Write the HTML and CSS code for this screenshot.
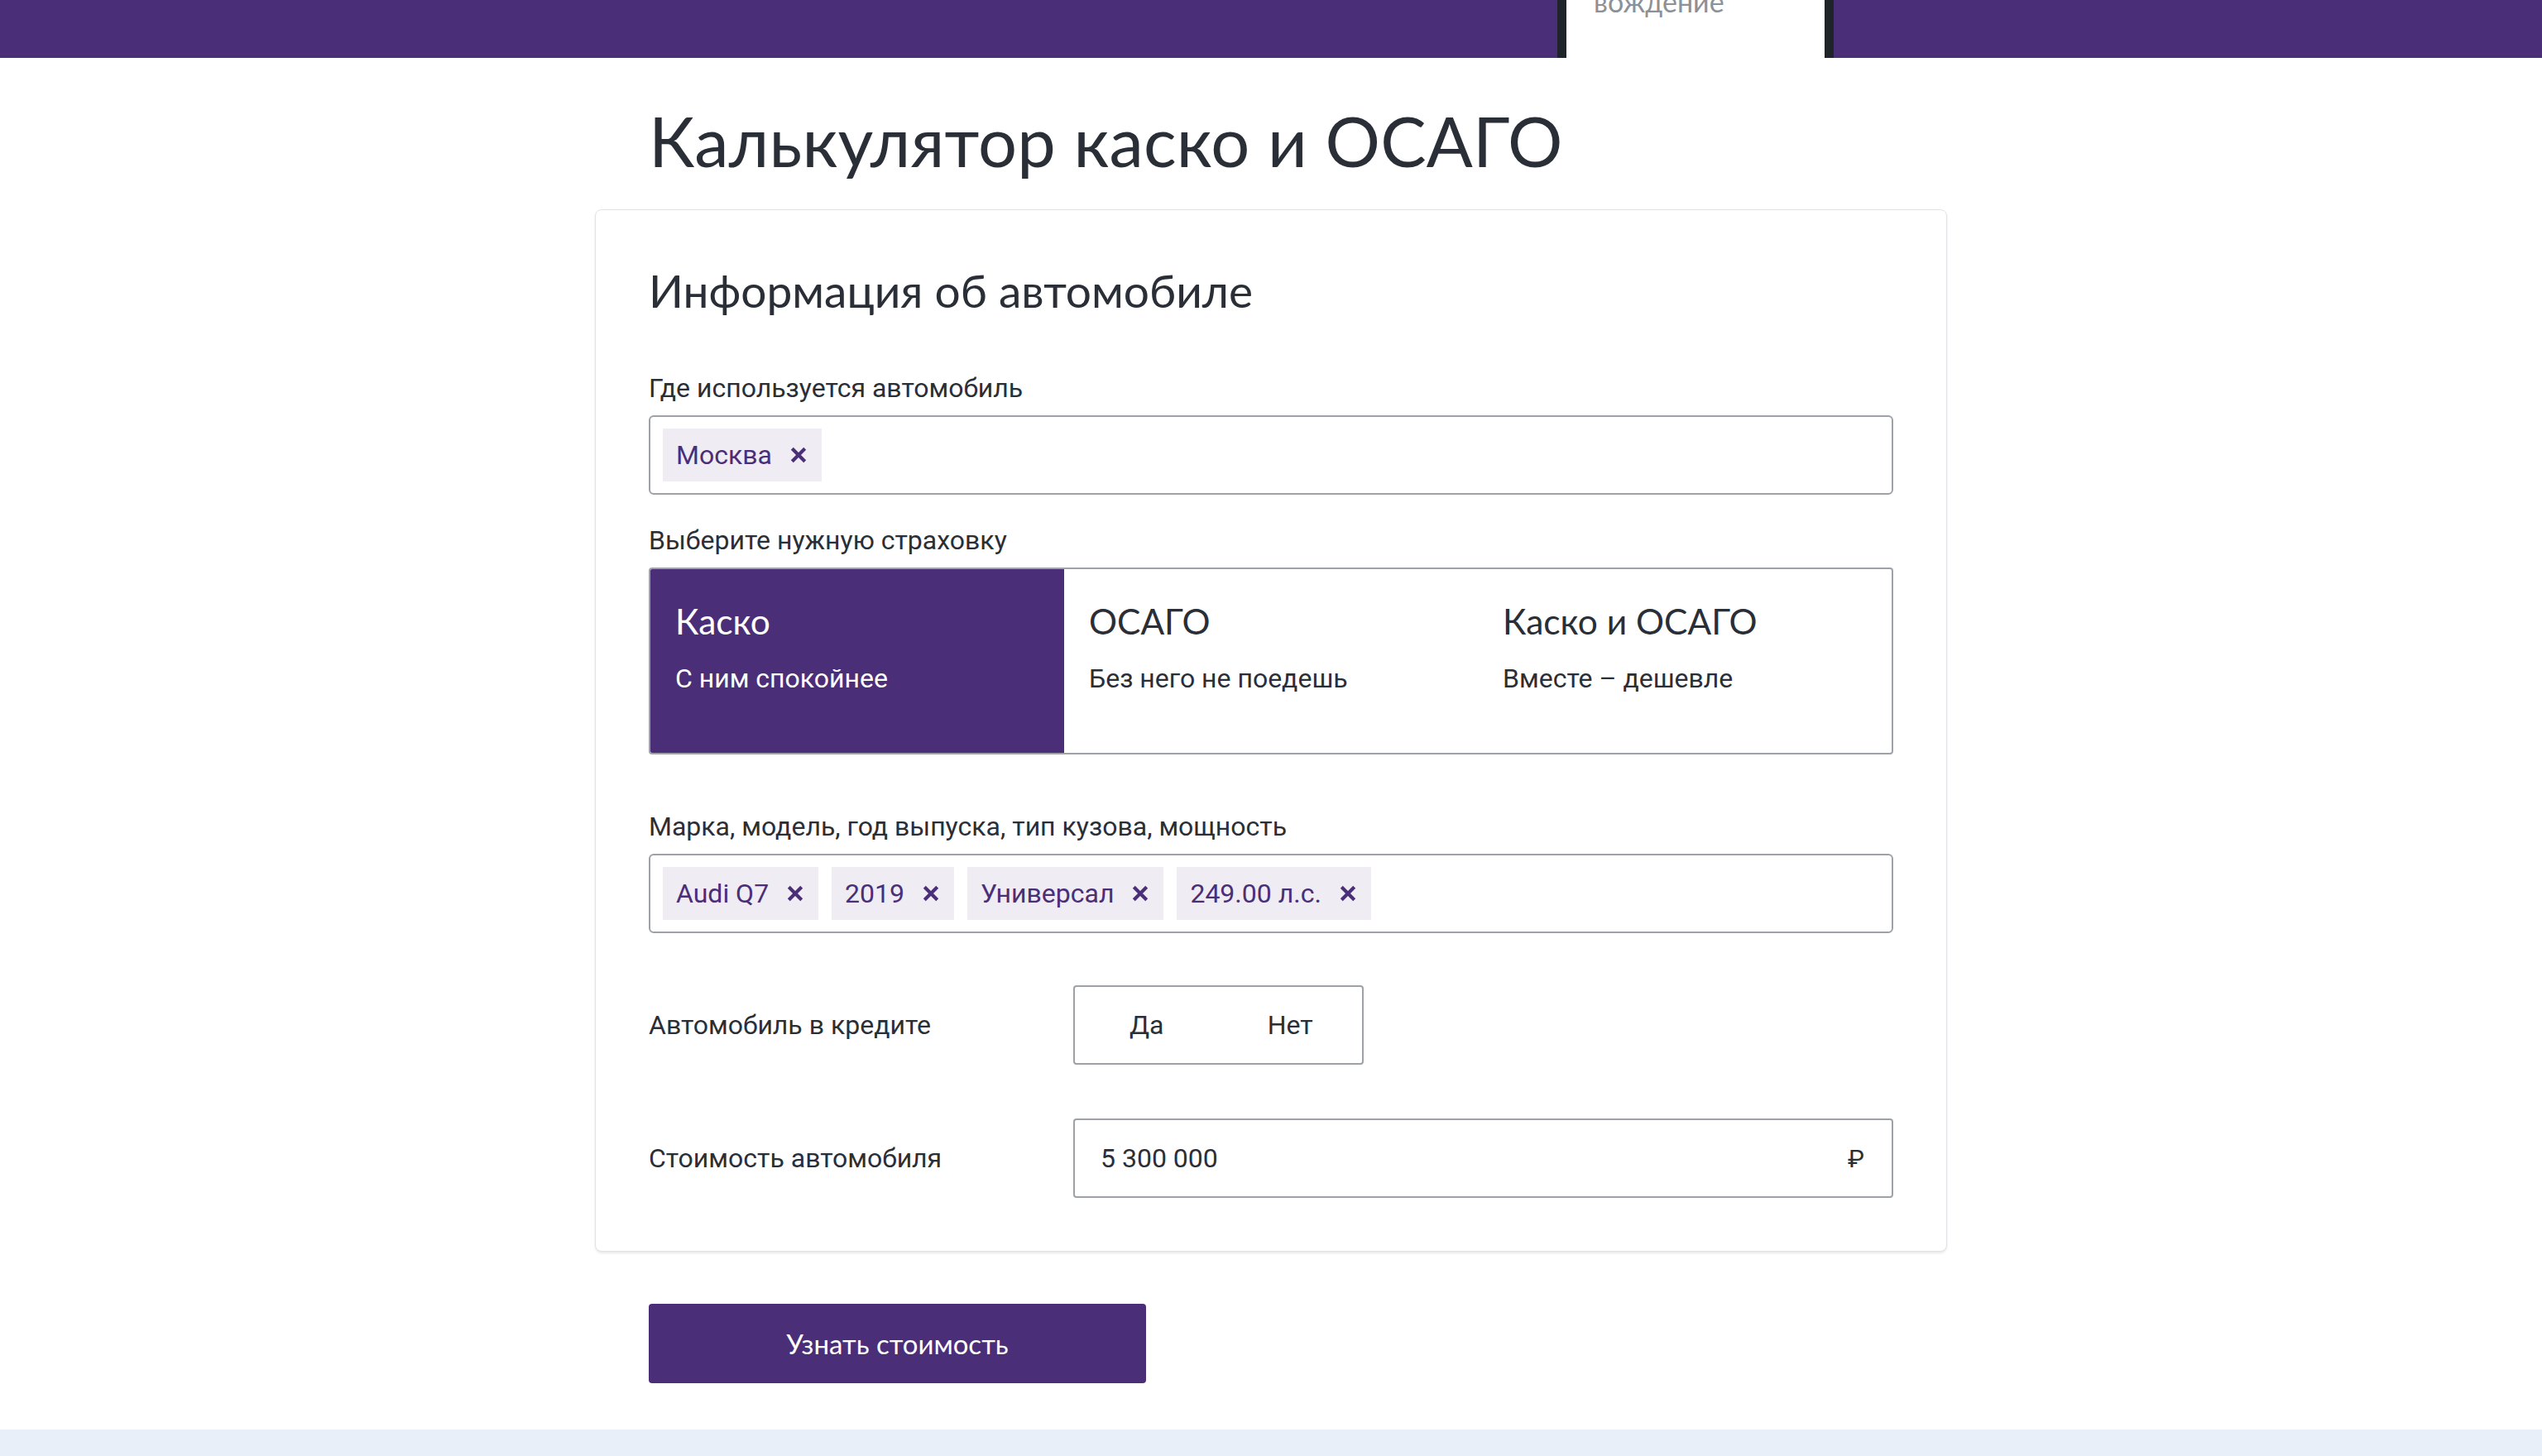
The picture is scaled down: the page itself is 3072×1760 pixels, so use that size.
FILE: index.html
```html
<!DOCTYPE html>
<html lang="ru">
<head>
<meta charset="utf-8">
<title>Калькулятор каско и ОСАГО</title>
<link rel="stylesheet" href="styles.css">
</head>
<body>
<header class="topbar">
  <div class="menu-tab"><span class="menu-tab-text">вождение</span></div>
</header>

<main class="page">
  <h1 class="title">Калькулятор каско и ОСАГО</h1>

  <section class="card">
    <h2 class="card-title">Информация об автомобиле</h2>

    <div class="label">Где используется автомобиль</div>
    <div class="field field-chips">
      <span class="chip">Москва<svg class="chip-x" viewBox="0 0 20 20"><path d="M3 3L17 17M17 3L3 17"/></svg></span>
    </div>

    <div class="label label-gap">Выберите нужную страховку</div>
    <div class="seg">
      <div class="seg-item seg-active">
        <div class="seg-title">Каско</div>
        <div class="seg-sub">С ним спокойнее</div>
      </div>
      <div class="seg-item">
        <div class="seg-title">ОСАГО</div>
        <div class="seg-sub">Без него не поедешь</div>
      </div>
      <div class="seg-item">
        <div class="seg-title">Каско и ОСАГО</div>
        <div class="seg-sub">Вместе – дешевле</div>
      </div>
    </div>

    <div class="label label-gap-lg">Марка, модель, год выпуска, тип кузова, мощность</div>
    <div class="field field-chips">
      <span class="chip">Audi Q7<svg class="chip-x" viewBox="0 0 20 20"><path d="M3 3L17 17M17 3L3 17"/></svg></span>
      <span class="chip">2019<svg class="chip-x" viewBox="0 0 20 20"><path d="M3 3L17 17M17 3L3 17"/></svg></span>
      <span class="chip">Универсал<svg class="chip-x" viewBox="0 0 20 20"><path d="M3 3L17 17M17 3L3 17"/></svg></span>
      <span class="chip">249.00 л.с.<svg class="chip-x" viewBox="0 0 20 20"><path d="M3 3L17 17M17 3L3 17"/></svg></span>
    </div>

    <div class="row row-credit">
      <div class="row-label">Автомобиль в кредите</div>
      <div class="toggle">
        <div class="toggle-opt">Да</div>
        <div class="toggle-opt">Нет</div>
      </div>
    </div>

    <div class="row row-price">
      <div class="row-label">Стоимость автомобиля</div>
      <div class="field field-price">
        <span class="price-value">5 300 000</span>
        <span class="price-cur">₽</span>
      </div>
    </div>
  </section>

  <button class="submit" type="button">Узнать стоимость</button>
</main>

<footer class="footer-strip"></footer>
</body>
</html>
```
FILE: styles.css
```css
* { box-sizing: border-box; }

html, body {
  margin: 0;
  padding: 0;
  background: #ffffff;
}

body {
  font-family: Roboto, "Noto Sans", sans-serif;
  font-size: 32px;
  color: #2a2f37;
  overflow: hidden;
}

/* top bar */
.topbar {
  position: relative;
  height: 70px;
  background: #4a2e77;
}

.menu-tab {
  position: absolute;
  left: 1882px;
  top: 0;
  width: 334px;
  height: 70px;
  background: #ffffff;
  border-left: 11px solid #1e2427;
  border-right: 11px solid #1e2427;
  overflow: hidden;
}

.menu-tab-text {
  position: absolute;
  left: 33px;
  top: -19px;
  font-family: Lato, "Noto Sans", sans-serif;
  font-size: 34px;
  line-height: 41px;
  color: #8c9198;
  white-space: nowrap;
}

/* page */
.page {
  width: 1634px;
  margin: 0 auto;
}

.title {
  margin: 51px 0 34px 65px;
  font-family: Lato, "Noto Sans", sans-serif;
  font-weight: 400;
  font-size: 83px;
  line-height: 98px;
  letter-spacing: 0.2px;
  color: #2a2f37;
}

.card {
  border: 1px solid #e2e3e6;
  border-radius: 8px;
  box-shadow: 0 2px 3px rgba(0, 0, 0, 0.09);
  padding: 64px;
  background: #ffffff;
}

.card-title {
  margin: 0 0 65px;
  font-family: Lato, "Noto Sans", sans-serif;
  font-weight: 400;
  font-size: 55px;
  line-height: 66px;
  color: #2a2f37;
}

.label {
  font-size: 32px;
  line-height: 40px;
  margin-bottom: 13px;
}

.label-gap { margin-top: 35px; }
.label-gap-lg { margin-top: 67px; }

.field {
  height: 96px;
  border: 2px solid #9ea2a7;
  border-radius: 6px;
  display: flex;
  align-items: center;
}

.field-chips {
  padding: 0 15px;
  gap: 16px;
}

.chip {
  height: 64px;
  display: inline-flex;
  align-items: center;
  gap: 21px;
  padding: 0 17px 0 16px;
  background: #efecf3;
  color: #4a2e77;
  font-size: 32px;
  line-height: 40px;
  white-space: nowrap;
}

.chip-x {
  width: 22px;
  height: 22px;
  fill: none;
  stroke: #4a2e77;
  stroke-width: 3.8;
  stroke-linecap: butt;
}

/* segmented choice */
.seg {
  display: flex;
  height: 226px;
  border: 2px solid #9ea2a7;
  border-radius: 4px;
  overflow: hidden;
}

.seg-item {
  flex: 1;
  padding: 38px 30px 0;
}

.seg-active {
  background: #4a2e77;
  color: #ffffff;
}

.seg-title {
  font-family: Lato, "Noto Sans", sans-serif;
  font-size: 42.5px;
  line-height: 50px;
}

.seg-sub {
  margin-top: 24px;
  font-size: 32px;
  line-height: 40px;
}

/* rows */
.row {
  display: flex;
  align-items: center;
}

.row-credit { margin-top: 63px; }
.row-price { margin-top: 65px; }

.row-label {
  width: 513px;
  flex: none;
  font-size: 32px;
  line-height: 40px;
}

.toggle {
  display: flex;
  width: 351px;
  height: 96px;
  border: 2px solid #9ea2a7;
  border-radius: 4px;
}

.toggle-opt {
  flex: 1;
  display: flex;
  align-items: center;
  justify-content: center;
  font-size: 32px;
}

.field-price {
  flex: 1;
  justify-content: space-between;
  padding: 0 33px 0 31px;
  border-radius: 4px;
}

.price-cur {
  font-size: 30px;
}

/* button */
.submit {
  display: flex;
  align-items: center;
  justify-content: center;
  margin: 63px 0 0 65px;
  width: 601px;
  height: 96px;
  border: none;
  border-radius: 4px;
  background: #4a2e77;
  color: #ffffff;
  font-family: Lato, "Noto Sans", sans-serif;
  font-size: 33px;
  font-weight: 400;
  cursor: pointer;
}

.footer-strip {
  margin-top: 56px;
  height: 32px;
  background: #e8eff8;
}
```
